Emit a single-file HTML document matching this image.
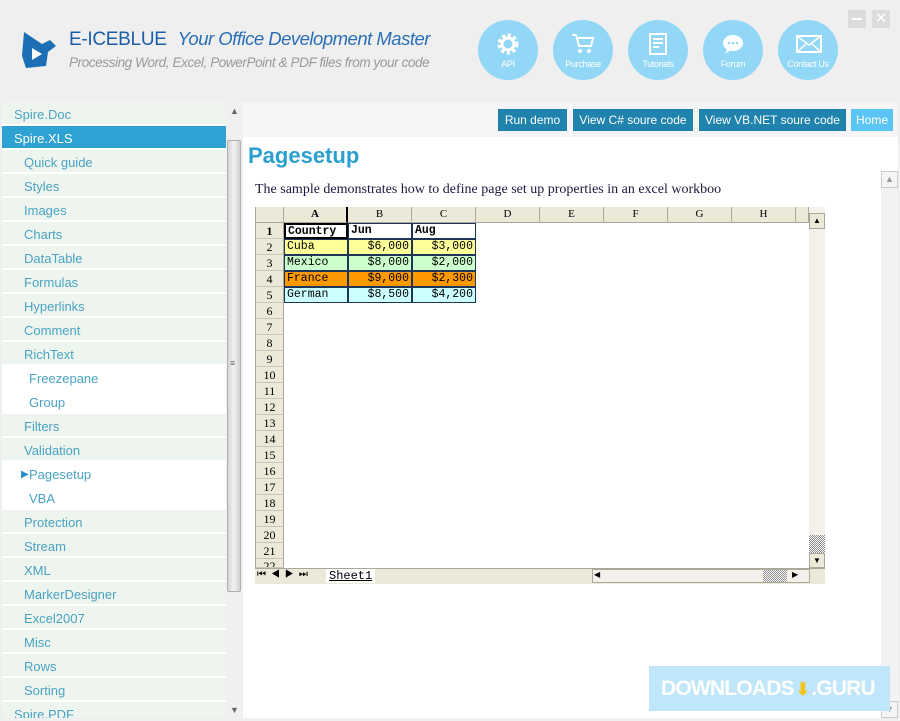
<!DOCTYPE html>
<html><head><meta charset="utf-8"><style>
*{margin:0;padding:0;box-sizing:border-box}
body{width:900px;height:721px;overflow:hidden;background:#efefef;font-family:"Liberation Sans",sans-serif;position:relative}
.abs{position:absolute}
.circ{position:absolute;width:60px;height:60px;border-radius:50%;background:#93d7f6;top:20px;color:#fff;font-size:9px;text-align:center}
.circ span{position:absolute;left:0;right:0;top:39px;letter-spacing:-.3px}
.circ svg{position:absolute;left:18px;top:12px}
.nav div{height:24px;border-bottom:2px solid #fff;font-size:13px;color:#4aa3c4;line-height:25px;background:#eef5ee}
.nav .t{padding-left:12px}
.nav .s{padding-left:22px}
.nav .ss{padding-left:27px;background:#fff}
.nav .sel{background:#2ea3d3;color:#fff;padding-left:12px}
.btn{position:absolute;top:109px;height:22px;background:#1f83ad;color:#fff;font-size:12px;line-height:22px;text-align:center}
.ch{position:absolute;top:207px;height:16px;background:#ece9d8;border-right:1px solid #aca899;border-bottom:1px solid #aca899;font-family:"Liberation Serif",serif;font-size:11px;text-align:center;line-height:15px}
.rh{position:absolute;left:256px;width:28px;height:16px;background:#ece9d8;border-right:1px solid #aca899;border-bottom:1px solid #c9c6b8;font-family:"Liberation Serif",serif;font-size:12px;text-align:center;line-height:16px}
.c{position:absolute;height:16px;width:64px;border:1px solid #1d3557;font-family:"Liberation Mono",monospace;font-size:11.5px;line-height:14px;padding:0 2px;white-space:nowrap;overflow:hidden}
.r{text-align:right}
</style></head><body>
<svg class="abs" style="left:20px;top:30px" width="40" height="40" viewBox="0 0 40 40"><path d="M4 2 L22 14 L30 10 L36 16 L28 22 L26 36 L6 38 L2 26 Z" fill="#1d6fb5"/><path d="M12 18 L22 24 L12 30 Z" fill="#fff"/></svg>
<div class="abs" style="left:69px;top:28px;font-size:19px;color:#1a5fa8;white-space:nowrap;letter-spacing:-.3px">E-ICEBLUE <i style="margin-left:6px;font-size:18.5px;color:#2a6fb6;letter-spacing:-.5px">Your Office Development Master</i></div>
<div class="abs" style="left:69px;top:55px;font-size:13.5px;color:#999;font-style:italic;white-space:nowrap;letter-spacing:-.4px">Processing Word, Excel, PowerPoint &amp; PDF files from your code</div>
<div class="circ" style="left:478px"><svg width="24" height="24" viewBox="0 0 24 24"><circle cx="12" cy="12" r="8" fill="none" stroke="#fff" stroke-width="5" stroke-dasharray="3 2.3"/><circle cx="12" cy="12" r="6" fill="none" stroke="#fff" stroke-width="3"/></svg><span>API</span></div>
<div class="circ" style="left:553px"><svg width="24" height="24" viewBox="0 0 24 24"><path d="M1 3h4l3 11h12l2-8H6" fill="none" stroke="#fff" stroke-width="2"/><circle cx="9" cy="19" r="2" fill="#fff"/><circle cx="18" cy="19" r="2" fill="#fff"/></svg><span>Purchase</span></div>
<div class="circ" style="left:628px"><svg width="24" height="24" viewBox="0 0 24 24"><rect x="4" y="2" width="16" height="20" fill="none" stroke="#fff" stroke-width="2"/><path d="M7 7h10M7 11h10M7 15h6" stroke="#fff" stroke-width="2"/></svg><span>Tutorials</span></div>
<div class="circ" style="left:703px"><svg width="24" height="24" viewBox="0 0 24 24"><ellipse cx="12" cy="11" rx="10" ry="8" fill="#fff"/><path d="M6 17l-2 5 6-4z" fill="#fff"/><circle cx="8" cy="11" r="1.3" fill="#93d7f6"/><circle cx="12" cy="11" r="1.3" fill="#93d7f6"/><circle cx="16" cy="11" r="1.3" fill="#93d7f6"/></svg><span>Forum</span></div>
<div class="circ" style="left:778px"><svg width="26" height="24" viewBox="0 0 26 24"><rect x="1" y="4" width="24" height="16" fill="none" stroke="#fff" stroke-width="2"/><path d="M1 4l12 9 12-9M1 20l9-8M25 20l-9-8" fill="none" stroke="#fff" stroke-width="1.5"/></svg><span>Contact Us</span></div>
<div class="abs" style="left:848px;top:10px;width:18px;height:18px;background:#dcdcdc"><div class="abs" style="left:4px;top:8px;width:10px;height:2px;background:#fff"></div></div>
<div class="abs" style="left:872px;top:10px;width:18px;height:18px;background:#dcdcdc;color:#fff;font-size:15px;line-height:18px;text-align:center">✕</div>
<div class="abs nav" style="left:2px;top:102px;width:224px;height:616px;overflow:hidden;background:#fff">
<div class="t">Spire.Doc</div><div class="sel">Spire.XLS</div>
<div class="s">Quick guide</div><div class="s">Styles</div><div class="s">Images</div><div class="s">Charts</div><div class="s">DataTable</div><div class="s">Formulas</div><div class="s">Hyperlinks</div><div class="s">Comment</div><div class="s">RichText</div>
<div class="ss">Freezepane</div><div class="ss">Group</div>
<div class="s">Filters</div><div class="s">Validation</div>
<div class="ss" style="position:relative"><span style="position:absolute;left:19px;font-size:10px;color:#2a8fc0">▶</span>Pagesetup</div><div class="ss">VBA</div>
<div class="s">Protection</div><div class="s">Stream</div><div class="s">XML</div><div class="s">MarkerDesigner</div><div class="s">Excel2007</div><div class="s">Misc</div><div class="s">Rows</div><div class="s">Sorting</div>
<div class="t">Spire.PDF</div></div>
<div class="abs" style="left:226px;top:102px;width:16px;height:616px;background:#f0f0f0"></div>
<div class="abs" style="left:230px;top:106px;font-size:9px;color:#666">▲</div>
<div class="abs" style="left:227px;top:140px;width:14px;height:452px;background:linear-gradient(90deg,#d5d5d5,#f3f3f3,#cfcfcf);border:1px solid #b0b0b0;border-radius:2px"></div>
<div class="abs" style="left:230px;top:358px;font-size:9px;color:#666">≡</div>
<div class="abs" style="left:230px;top:705px;font-size:9px;color:#666">▼</div>
<div class="abs" style="left:243px;top:102px;width:655px;height:35px;background:#f5f5f5"></div>
<div class="btn" style="left:498px;width:69px">Run demo</div>
<div class="btn" style="left:573px;width:120px">View C# soure code</div>
<div class="btn" style="left:699px;width:147px">View VB.NET soure code</div>
<div class="btn" style="left:851px;width:42px;background:#5bc6f5">Home</div>
<div class="abs" style="left:243px;top:137px;width:655px;height:581px;background:#fff"></div>
<div class="abs" style="left:881px;top:171px;width:17px;height:547px;background:#f2f2f2"></div>
<div class="abs" style="left:881px;top:171px;width:17px;height:17px;background:#f4f4f4;border:1px solid #ccc;color:#999;font-size:9px;text-align:center;line-height:15px">▲</div>
<div class="abs" style="left:881px;top:701px;width:17px;height:17px;background:#f4f4f4;border:1px solid #ccc;color:#999;font-size:9px;text-align:center;line-height:15px">▼</div>
<div class="abs" style="left:248px;top:143px;font-size:22px;font-weight:bold;color:#2a9fd0">Pagesetup</div>
<div class="abs" style="left:255px;top:182px;font-size:14px;font-family:'Liberation Serif',serif;color:#1a1a40">The sample demonstrates how to define page set up properties in an excel workboo</div>
<div class="abs" style="left:255px;top:207px;width:570px;height:377px;background:#fff;border-left:1px solid #aca899"></div>
<div class="ch" style="left:256px;width:28px"></div>
<div class="ch" style="left:284px;width:64px;font-weight:bold;border-right:2px solid #000">A</div>
<div class="ch" style="left:348px;width:64px">B</div><div class="ch" style="left:412px;width:64px">C</div><div class="ch" style="left:476px;width:64px">D</div><div class="ch" style="left:540px;width:64px">E</div><div class="ch" style="left:604px;width:64px">F</div><div class="ch" style="left:668px;width:64px">G</div><div class="ch" style="left:732px;width:64px">H</div><div class="ch" style="left:796px;width:13px"></div>
<div class="rh" style="top:223px;font-weight:bold">1</div><div class="rh" style="top:239px">2</div><div class="rh" style="top:255px">3</div><div class="rh" style="top:271px">4</div><div class="rh" style="top:287px">5</div><div class="rh" style="top:303px">6</div><div class="rh" style="top:319px">7</div><div class="rh" style="top:335px">8</div><div class="rh" style="top:351px">9</div><div class="rh" style="top:367px">10</div><div class="rh" style="top:383px">11</div><div class="rh" style="top:399px">12</div><div class="rh" style="top:415px">13</div><div class="rh" style="top:431px">14</div><div class="rh" style="top:447px">15</div><div class="rh" style="top:463px">16</div><div class="rh" style="top:479px">17</div><div class="rh" style="top:495px">18</div><div class="rh" style="top:511px">19</div><div class="rh" style="top:527px">20</div><div class="rh" style="top:543px">21</div><div class="rh" style="top:559px;height:9px;overflow:hidden;line-height:14px">22</div>
<div class="c" style="left:284px;top:223px;font-weight:bold;border:2px solid #000">Country</div><div class="c" style="left:348px;top:223px;font-weight:bold">Jun</div><div class="c" style="left:412px;top:223px;font-weight:bold">Aug</div>
<div class="c" style="left:284px;top:239px;background:#ffff99">Cuba</div><div class="c r" style="left:348px;top:239px;background:#ffff99">$6,000</div><div class="c r" style="left:412px;top:239px;background:#ffff99">$3,000</div>
<div class="c" style="left:284px;top:255px;background:#ccffcc">Mexico</div><div class="c r" style="left:348px;top:255px;background:#ccffcc">$8,000</div><div class="c r" style="left:412px;top:255px;background:#ccffcc">$2,000</div>
<div class="c" style="left:284px;top:271px;background:#ff9900">France</div><div class="c r" style="left:348px;top:271px;background:#ff9900">$9,000</div><div class="c r" style="left:412px;top:271px;background:#ff9900">$2,300</div>
<div class="c" style="left:284px;top:287px;background:#ccffff">German</div><div class="c r" style="left:348px;top:287px;background:#ccffff">$8,500</div><div class="c r" style="left:412px;top:287px;background:#ccffff">$4,200</div>
<div class="abs" style="left:809px;top:207px;width:16px;height:361px;background:#f3f1ea"></div>
<div class="abs" style="left:809px;top:213px;width:16px;height:16px;background:#ece9d8;border:1px solid #aca899;font-size:8px;text-align:center;line-height:14px">▲</div>
<div class="abs" style="left:809px;top:535px;width:16px;height:18px;background:repeating-conic-gradient(#888 0 25%,#fff 0 50%) 0 0/2px 2px"></div>
<div class="abs" style="left:809px;top:553px;width:16px;height:15px;background:#ece9d8;border:1px solid #aca899;font-size:8px;text-align:center;line-height:13px">▼</div>
<div class="abs" style="left:255px;top:568px;width:570px;height:16px;background:#ece9d8;border-top:1px solid #aca899"></div>
<div class="abs" style="left:257px;top:569px;font-size:10px;letter-spacing:5px">⏮◀▶⏭</div>
<div class="abs" style="left:326px;top:569px;font-family:'Liberation Mono',monospace;font-size:12px;text-decoration:underline;background:#fff;padding:0 3px">Sheet1</div>
<div class="abs" style="left:592px;top:569px;width:218px;height:14px;background:#f3f1ea;border:1px solid #aca899"></div>
<div class="abs" style="left:594px;top:570px;font-size:8px">◀</div>
<div class="abs" style="left:763px;top:570px;width:24px;height:12px;background:repeating-conic-gradient(#888 0 25%,#fff 0 50%) 0 0/2px 2px"></div>
<div class="abs" style="left:792px;top:570px;font-size:8px">▶</div>
<div class="abs" style="left:649px;top:666px;width:241px;height:45px;background:#bfe6fa;color:#fff;font-size:21px;font-weight:bold;line-height:45px;padding-left:12px;letter-spacing:-.8px;white-space:nowrap;overflow:hidden">DOWNLOADS<span style="color:#f5c518;font-size:17px;margin:0 2px">⬇</span>.GURU</div>
</body></html>
